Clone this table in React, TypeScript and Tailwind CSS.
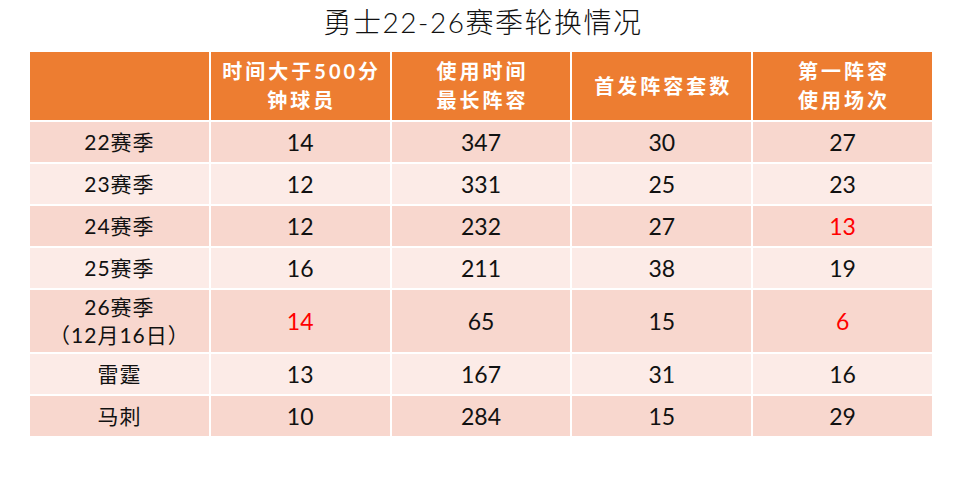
import React from "react";

type Cell = { v: string; red?: boolean };
type Row = { label: React.ReactNode; cells: Cell[]; tall?: boolean };

const rows: Row[] = [
  { label: "22赛季", cells: [{ v: "14" }, { v: "347" }, { v: "30" }, { v: "27" }] },
  { label: "23赛季", cells: [{ v: "12" }, { v: "331" }, { v: "25" }, { v: "23" }] },
  { label: "24赛季", cells: [{ v: "12" }, { v: "232" }, { v: "27" }, { v: "13", red: true }] },
  { label: "25赛季", cells: [{ v: "16" }, { v: "211" }, { v: "38" }, { v: "19" }] },
  {
    label: (
      <>
        <span>26赛季</span>
        <span>（12月16日）</span>
      </>
    ),
    cells: [{ v: "14", red: true }, { v: "65" }, { v: "15" }, { v: "6", red: true }],
    tall: true,
  },
  { label: "雷霆", cells: [{ v: "13" }, { v: "167" }, { v: "31" }, { v: "16" }] },
  { label: "马刺", cells: [{ v: "10" }, { v: "284" }, { v: "15" }, { v: "29" }] },
];

const headers: string[][] = [
  [],
  ["时间大于500分", "钟球员"],
  ["使用时间", "最长阵容"],
  ["首发阵容套数"],
  ["第一阵容", "使用场次"],
];

export default function App() {
  return (
    <div
      className="w-[960px] h-[478px] bg-white overflow-hidden"
      style={{ fontFamily: 'Lato, "Noto Sans CJK SC", sans-serif' }}
    >
      <div className="h-[52px] flex items-center justify-center pb-[8px] pl-[6px] text-[28px] font-light tracking-[1.5px] text-[#111] leading-none">
        勇士22-26赛季轮换情况
      </div>
      <div className="ml-[30px] w-[902px] grid grid-cols-5 gap-[2px] bg-white">
        {headers.map((h, i) => (
          <div
            key={i}
            className="h-[68px] bg-[#ED7D31] flex flex-col items-center justify-center text-white font-bold text-[20px] leading-[29px] tracking-[3px] pl-[3px]"
          >
            {h.map((line, j) => (
              <span key={j}>{line}</span>
            ))}
          </div>
        ))}
        {rows.map((r, ri) => {
          const bg = ri % 2 === 0 ? "bg-[#F8D7CE]" : "bg-[#FCEBE7]";
          const h = r.tall ? "h-[62px]" : "h-[40px]";
          return (
            <React.Fragment key={ri}>
              <div
                className={`${bg} ${h} flex flex-col items-center justify-center text-[21px] leading-[28px] text-[#111] tracking-[1px]`}
              >
                {r.label}
              </div>
              {r.cells.map((c, ci) => (
                <div
                  key={ci}
                  className={`${bg} ${h} flex items-center justify-center text-[23px] ${
                    c.red ? "text-[#FF0000]" : "text-[#111]"
                  }`}
                >
                  {c.v}
                </div>
              ))}
            </React.Fragment>
          );
        })}
      </div>
    </div>
  );
}
